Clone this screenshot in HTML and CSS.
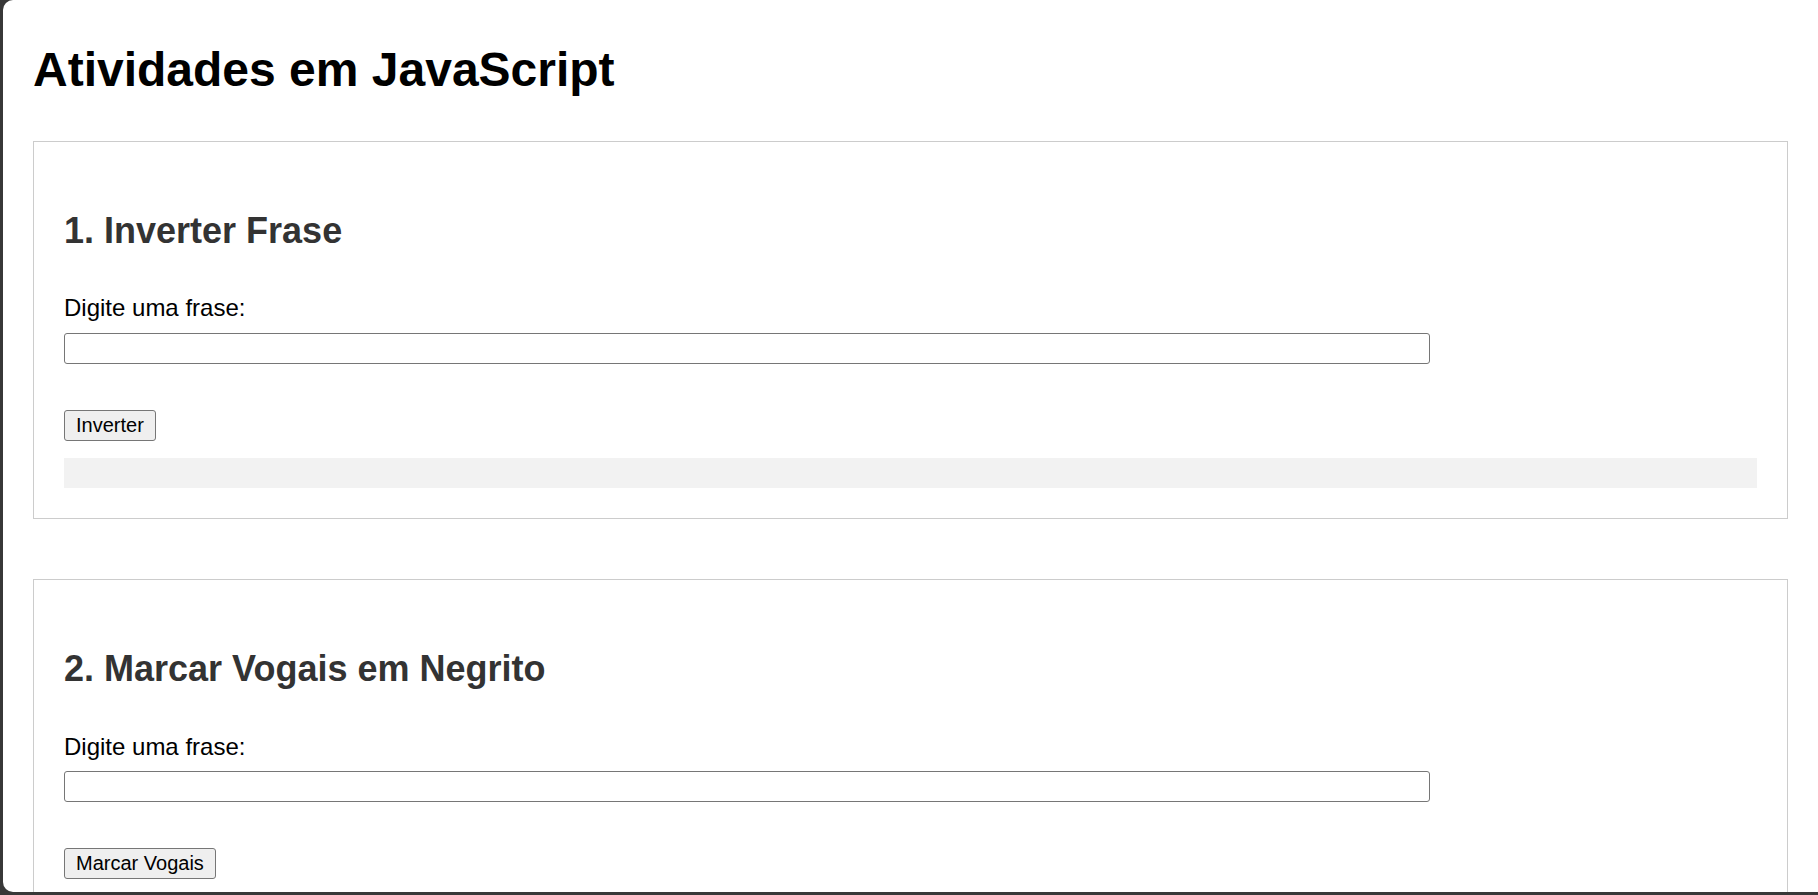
FILE: index.html
```html
<!DOCTYPE html>
<html lang="pt-BR">
<head>
<meta charset="utf-8">
<title>Atividades em JavaScript</title>
<link rel="stylesheet" href="styles.css">
</head>
<body>
<div class="window">
  <div class="page">
    <h1 class="title">Atividades em JavaScript</h1>

    <div class="atividade">
      <h2 class="atividade-title">1. Inverter Frase</h2>
      <label class="field-label" for="frase1">Digite uma frase:</label><br>
      <input class="field-input" type="text" id="frase1"><br><br>
      <button class="btn" type="button">Inverter</button>
      <div class="resultado"></div>
    </div>

    <div class="atividade">
      <h2 class="atividade-title">2. Marcar Vogais em Negrito</h2>
      <label class="field-label" for="frase2">Digite uma frase:</label><br>
      <input class="field-input" type="text" id="frase2"><br><br>
      <button class="btn" type="button">Marcar Vogais</button>
      <div class="resultado"></div>
    </div>
  </div>
</div>
</body>
</html>
```

FILE: styles.css
```css
html {
  height: 100%;
  overflow: hidden;
  background: #383838;
}

body {
  margin: 0;
  height: 100%;
  font-family: "Liberation Sans", Arial, sans-serif;
  font-size: 24px;
  line-height: 1.6;
  color: #000;
}

.window {
  margin-left: 3px;
  height: 892px;
  background: #fff;
  border-radius: 10px 0 0 10px;
  overflow: hidden;
}

.page {
  margin: 30px;
}

.title {
  font-size: 48px;
  font-weight: bold;
  margin: 32px 0;
}

.atividade {
  border: 1px solid #ccc;
  padding: 30px;
  margin-bottom: 60px;
}

.atividade-title {
  font-size: 36px;
  font-weight: bold;
  color: #333;
  margin: 30px 0;
}

.field-label {
  font-size: 24px;
}

.field-input {
  box-sizing: content-box;
  width: 80%;
  font-family: "Liberation Sans", Arial, sans-serif;
  font-size: 20px;
  line-height: normal;
  padding: 3px 5px;
  border: 1px solid #767676;
  border-radius: 3px;
  background: #fff;
  margin: 0;
}

.btn {
  font-family: "Liberation Sans", Arial, sans-serif;
  font-size: 20px;
  line-height: normal;
  color: #000;
  padding: 3px 11px;
  border: 1px solid #767676;
  border-radius: 3px;
  background: #efefef;
  margin: 0;
}

.resultado {
  margin-top: 15px;
  padding: 15px;
  background: #f2f2f2;
}
```
